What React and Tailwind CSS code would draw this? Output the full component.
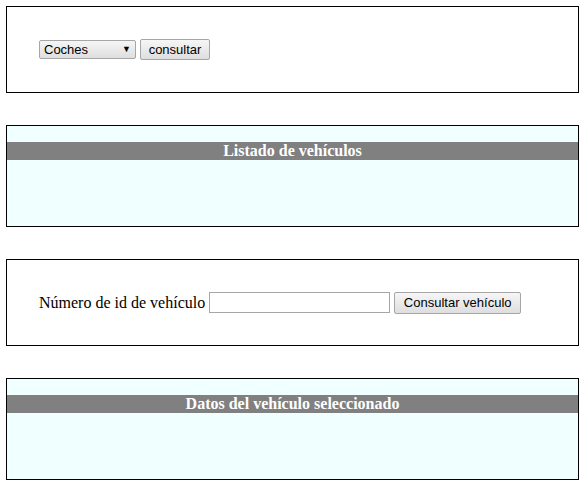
import { useState } from 'react';

function Box({ tall, tint, children }) {
    return (
        <div
            className={`w-[573px] border border-black ${tall ? 'h-[102px]' : 'h-[87px]'} ${tint ? 'bg-[#f0ffff]' : 'bg-white'}`}
        >
            {children}
        </div>
    );
}

function TitleBar({ text }) {
    return (
        <div className="mt-[16px] h-[18px] bg-[#808080] text-center text-white font-bold text-[16px] leading-[18px] font-['Liberation_Serif',serif]">
            {text}
        </div>
    );
}

const btn =
    "h-[21px] px-[6px] border border-[#a6a6a6] rounded-[2px] bg-gradient-to-b from-[#f6f6f6] to-[#dedede] text-[13px] leading-[19px] text-black font-['Liberation_Sans',Arial,sans-serif]";

export default function App() {
    const [tipo, setTipo] = useState('Coches');
    const [id, setId] = useState('');

    return (
        <div className="bg-white min-h-[490px] pt-[6px] pl-[6px] flex flex-col gap-[32px]">
            {/* Tipo de vehículo */}
            <Box>
                <div className="h-full flex items-center pl-[32px] gap-[4px]">
                    <div className="relative w-[97px] h-[19px]">
                        <select
                            value={tipo}
                            onChange={(e) => setTipo(e.target.value)}
                            className="block appearance-none w-full h-[19px] py-0 pl-[4px] border border-[#a6a6a6] rounded-[2px] bg-gradient-to-b from-[#f6f6f6] to-[#dedede] text-[13px] leading-[17px] text-black font-['Liberation_Sans',Arial,sans-serif]"
                        >
                            <option>Coches</option>
                            <option>Motos</option>
                            <option>Camiones</option>
                        </select>
                        <span className="pointer-events-none absolute right-[5px] top-[2px] text-[9px] leading-[14px] text-black">▼</span>
                    </div>
                    <button className={`${btn} w-[70px]`}>consultar</button>
                </div>
            </Box>

            {/* Listado */}
            <Box tall tint>
                <TitleBar text="Listado de vehículos" />
            </Box>

            {/* Consulta por id */}
            <Box>
                <div className="h-full flex items-center pl-[32px] font-['Liberation_Serif',serif] text-[16px] text-black">
                    <span>Número de id de vehículo</span>
                    <input
                        type="text"
                        value={id}
                        onChange={(e) => setId(e.target.value)}
                        className="ml-[4px] w-[181px] h-[21px] border border-[#a6a6a6] bg-white px-[2px] text-[13px] outline-none"
                    />
                    <button className={`${btn} ml-[4px] w-[127px] h-[22px]`}>Consultar vehículo</button>
                </div>
            </Box>

            {/* Datos */}
            <Box tall tint>
                <TitleBar text="Datos del vehículo seleccionado" />
            </Box>
        </div>
    );
}
